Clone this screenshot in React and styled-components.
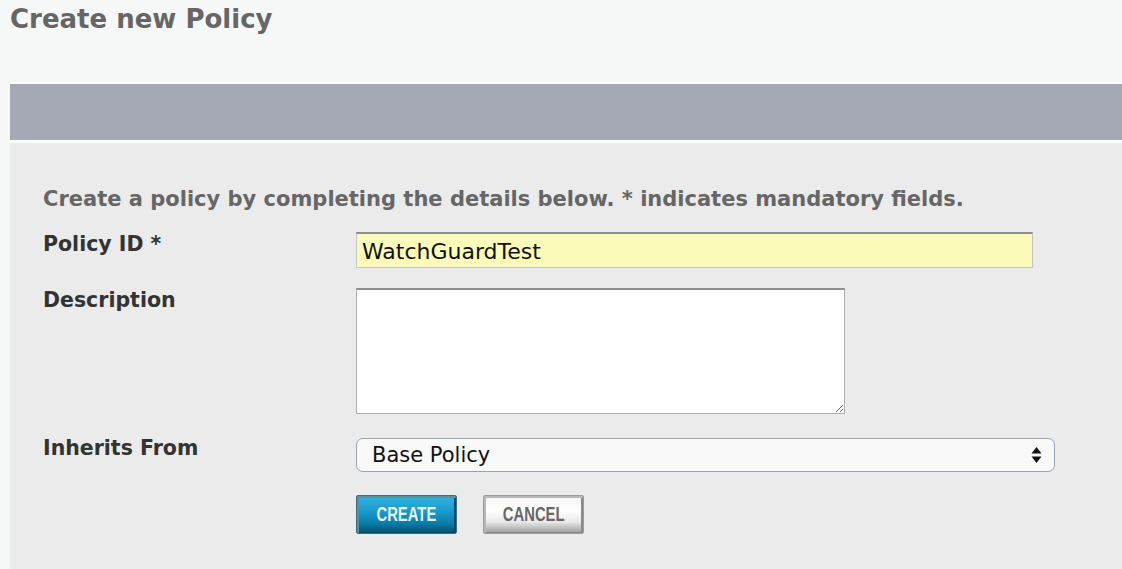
import React from "react";
import styled, { createGlobalStyle } from "styled-components";

const GlobalStyle = createGlobalStyle`
  html, body {
    margin: 0;
    padding: 0;
    background: #f6f7f7;
    font-family: "DejaVu Sans", Verdana, sans-serif;
  }
`;

const App = () => {
  return (
    <Page>
      <GlobalStyle />
      <Title>Create new Policy</Title>
      <Panel>
        <PanelHeader />
        <PanelBody>
          <Intro>
            Create a policy by completing the details below. * indicates mandatory fields.
          </Intro>
          <Form>
            <Label>Policy ID *</Label>
            <TextInput defaultValue="WatchGuardTest" />

            <Label>Description</Label>
            <TextArea />

            <Label $top={-2}>Inherits From</Label>
            <SelectBox>
              <span>Base Policy</span>
              <Arrows>
                <svg width="11" height="18" viewBox="0 0 11 18">
                  <path d="M5.5 1 L10.5 7.5 H0.5 Z" fill="#111" />
                  <path d="M5.5 17 L10.5 10.5 H0.5 Z" fill="#111" />
                </svg>
              </Arrows>
            </SelectBox>

            <span />
            <Buttons>
              <ActionButton $primary>
                <ButtonText>CREATE</ButtonText>
              </ActionButton>
              <ActionButton>
                <ButtonText>CANCEL</ButtonText>
              </ActionButton>
            </Buttons>
          </Form>
        </PanelBody>
      </Panel>
    </Page>
  );
};

const Page = styled.div`
  width: 1122px;
  height: 569px;
  overflow: hidden;
  padding-left: 10px;
  box-sizing: border-box;
`;

const Title = styled.h1`
  margin: 0;
  padding-top: 3px;
  height: 82px;
  box-sizing: border-box;
  font-size: 26px;
  font-weight: bold;
  color: #666;
  line-height: 32px;
`;

const Panel = styled.div`
  border-top: 2px solid #ffffff;
`;

const PanelHeader = styled.div`
  height: 56px;
  background: #a4a9b5;
  border-bottom: 3px solid #ffffff;
`;

const PanelBody = styled.div`
  background: #ebebeb;
  padding: 42px 0 40px 33px;
  height: 430px;
  box-sizing: border-box;
`;

const Intro = styled.div`
  font-size: 21px;
  font-weight: bold;
  color: #666;
  line-height: 28px;
  white-space: nowrap;
`;

const Form = styled.div`
  display: grid;
  grid-template-columns: 313px 1fr;
  align-items: start;
  margin-top: 19px;
  row-gap: 20px;
`;

const Label = styled.div`
  font-size: 20.5px;
  font-weight: bold;
  color: #333;
  line-height: 24px;
  margin-top: ${(p) => p.$top || 0}px;
`;

const TextInput = styled.input`
  width: 677px;
  height: 36px;
  box-sizing: border-box;
  background: #fafbb8;
  border: 1px solid #c4c4c4;
  border-top: 2px solid #8f8f8f;
  font-family: "DejaVu Sans", Verdana, sans-serif;
  font-size: 22px;
  color: #111;
  padding: 2px 5px 0;
  outline: none;
`;

const TextArea = styled.textarea`
  display: block;
  width: 489px;
  height: 126px;
  box-sizing: border-box;
  background: #fff;
  border: 1px solid #b0b0b0;
  border-top: 2px solid #8f8f8f;
  resize: both;
  outline: none;
  margin-bottom: 4px;
`;

const SelectBox = styled.div`
  width: 699px;
  height: 34px;
  box-sizing: border-box;
  display: flex;
  align-items: center;
  justify-content: space-between;
  padding: 0 12px 0 15px;
  background: #f9f9f9;
  border: 1px solid #9aa3b3;
  border-radius: 7px;
  font-size: 21px;
  color: #111;
`;

const Arrows = styled.span`
  display: flex;
  align-items: center;
`;

const Buttons = styled.div`
  display: flex;
  gap: 26px;
  margin-top: 3px;
`;

const ActionButton = styled.button`
  width: 101px;
  height: 39px;
  padding: 0;
  display: flex;
  align-items: center;
  justify-content: center;
  box-sizing: border-box;
  border-radius: 2px;
  cursor: pointer;
  color: ${(p) => (p.$primary ? "#e8f4fa" : "#666")};
  border: 1px solid ${(p) => (p.$primary ? "#3a6f82" : "#9a9a9a")};
  background: ${(p) =>
    p.$primary
      ? "linear-gradient(#2fb6e6 0%, #1898c8 45%, #0a7aa6 75%, #05506e 100%)"
      : "linear-gradient(#f4f4f4 0%, #ffffff 40%, #e8e8e8 70%, #9c9c9c 100%)"};
  box-shadow: inset 2px 2px 0 ${(p) => (p.$primary ? "#5a8ea0" : "#b8b8b8")},
    inset -2px -1px 0 ${(p) => (p.$primary ? "#044c66" : "#8a8a8a")};
`;

const ButtonText = styled.span`
  display: inline-block;
  font-family: "Liberation Sans", Arial, sans-serif;
  font-weight: bold;
  font-size: 20px;
  transform: scaleX(0.74);
`;

export default App;
